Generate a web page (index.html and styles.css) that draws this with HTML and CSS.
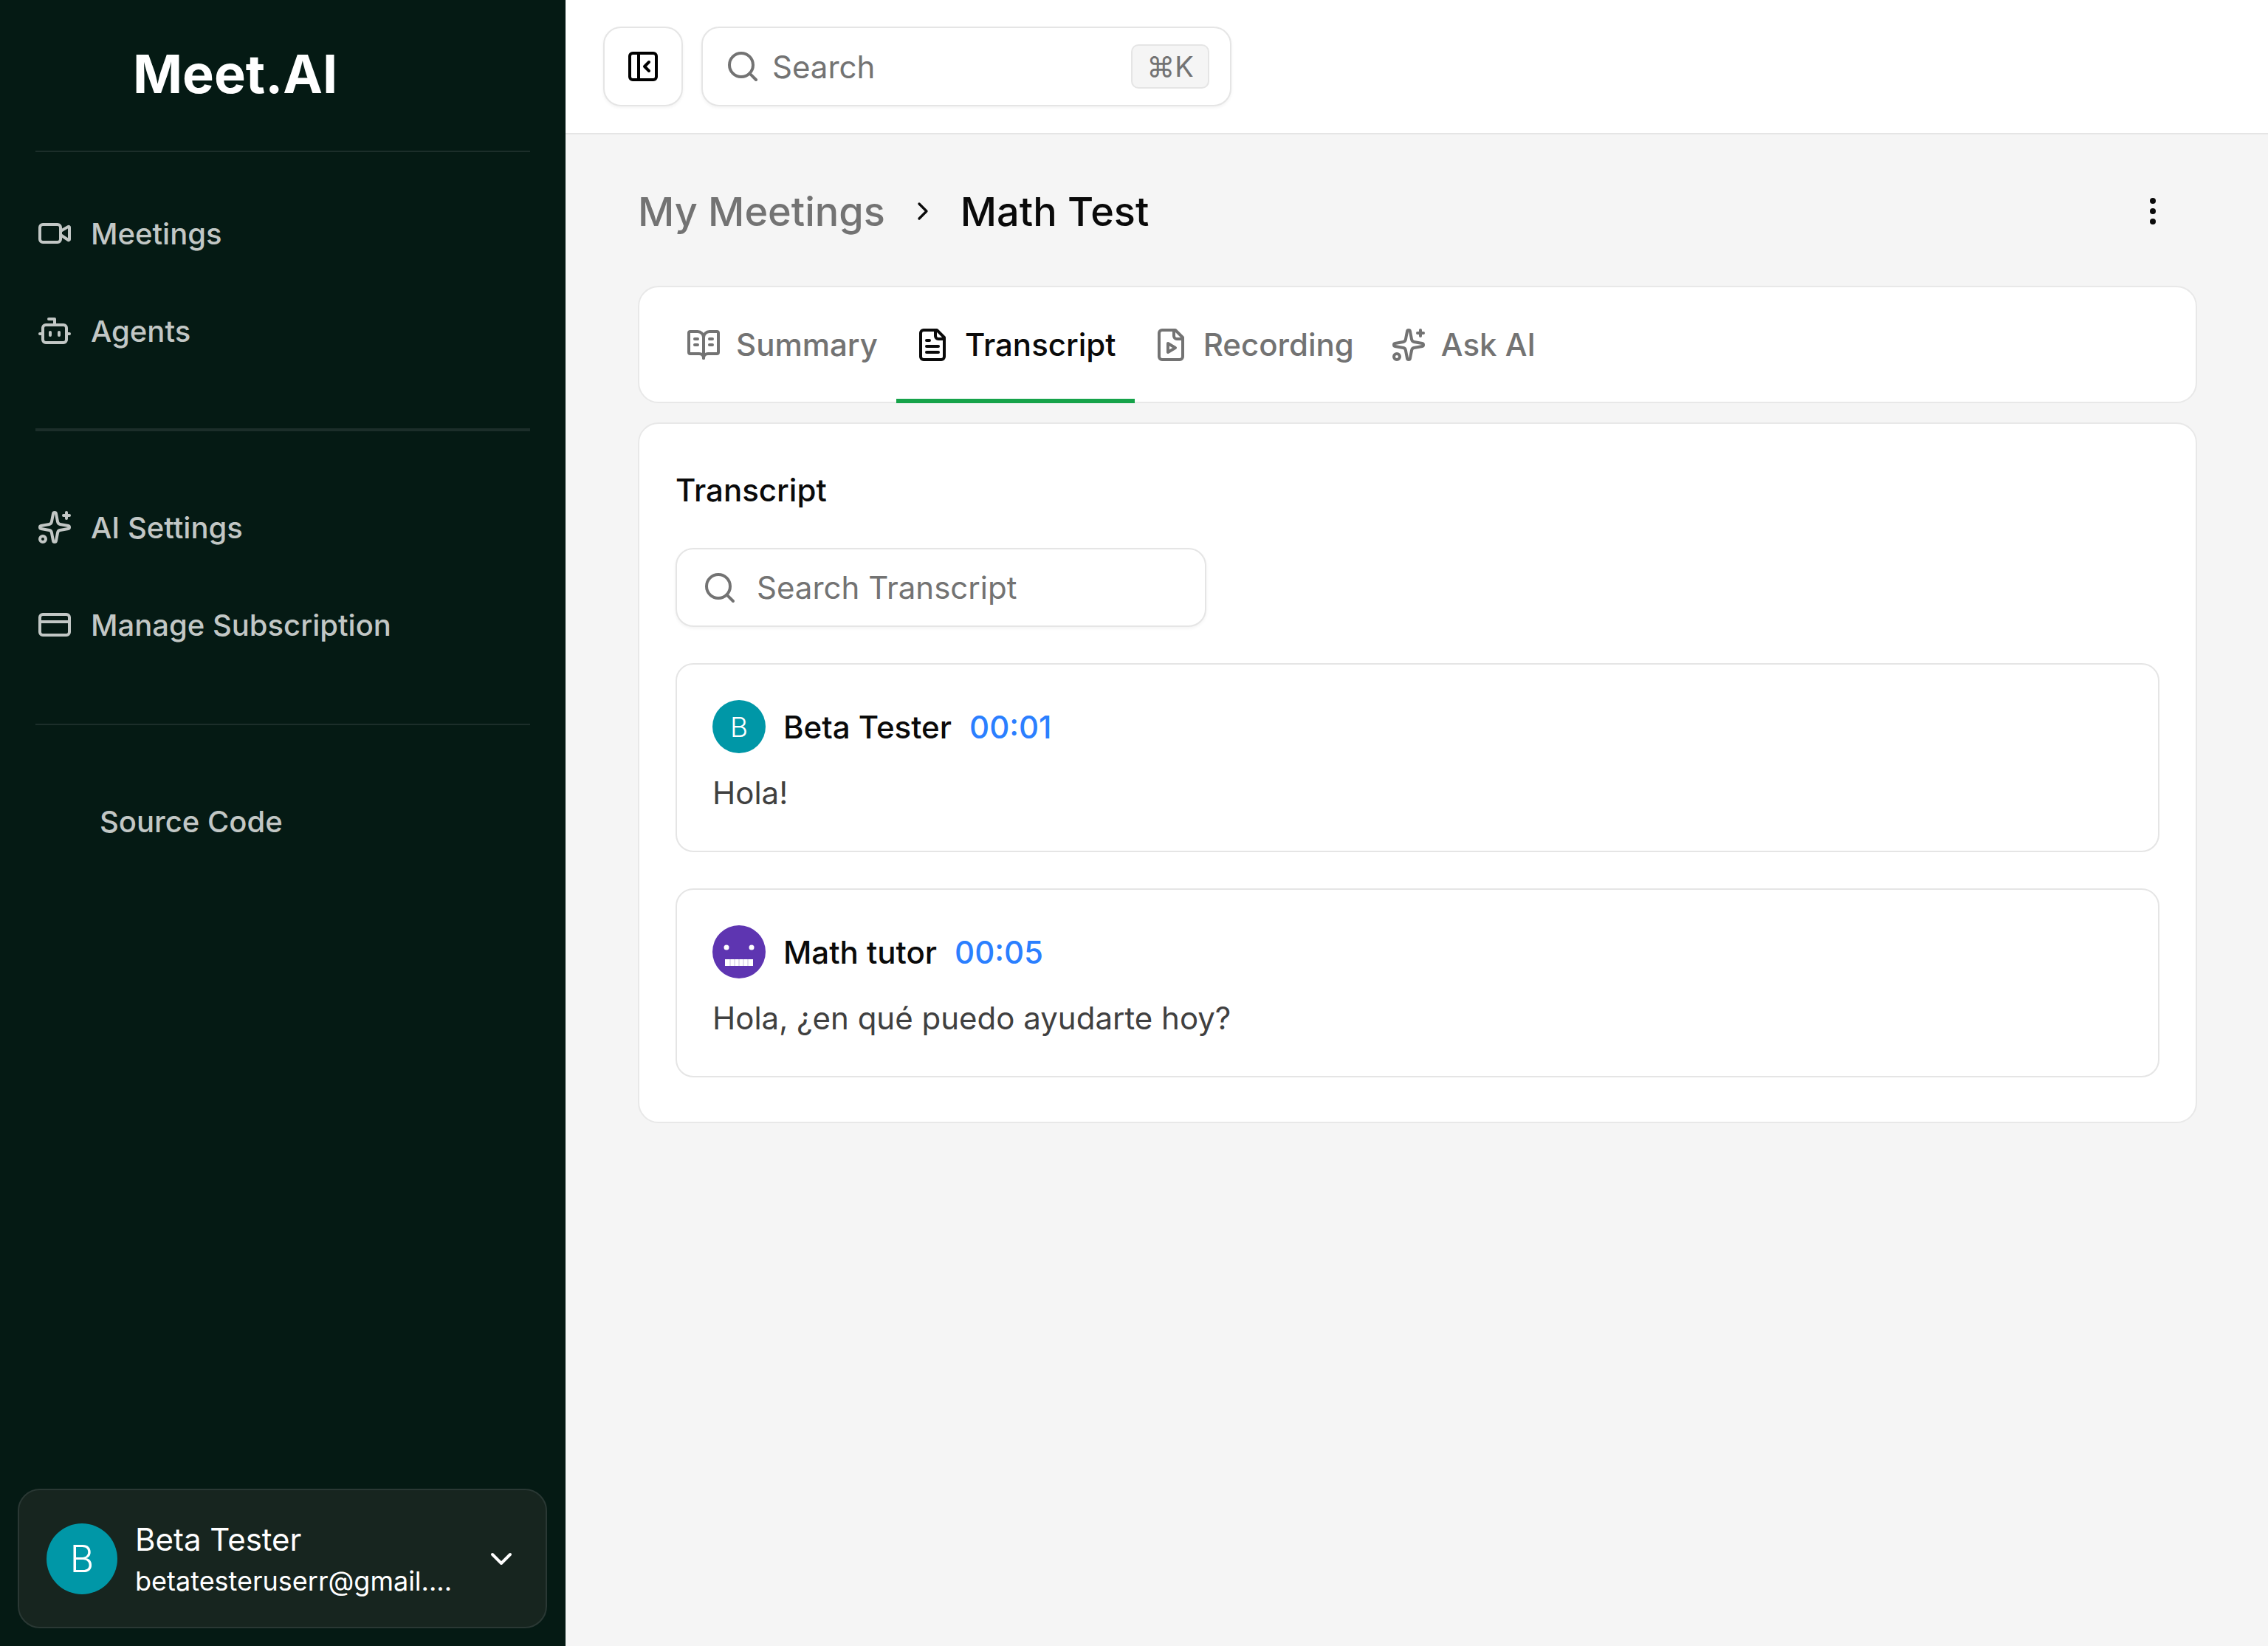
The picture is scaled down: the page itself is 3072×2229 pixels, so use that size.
FILE: index.html

```html
<!DOCTYPE html>
<html>
<head>
    <meta charset="utf-8">
    <title>Meet.AI</title>
    <link rel="stylesheet" href="styles.css">
</head>
<body>
<aside class="sidebar">
    <div class="logo">Meet.AI</div>
    <div class="divider"></div>
    <nav class="nav-section first">
        <a class="nav-item">
            <svg class="icon" viewBox="0 0 24 24"><path d="m16 13 5.223 3.482a.5.5 0 0 0 .777-.416V7.87a.5.5 0 0 0-.752-.432L16 10.5"/><rect x="2" y="6" width="14" height="12" rx="2"/></svg>
            <span>Meetings</span>
        </a>
        <a class="nav-item">
            <svg class="icon" viewBox="0 0 24 24"><path d="M12 8V4H8"/><rect width="16" height="12" x="4" y="8" rx="2"/><path d="M2 14h2"/><path d="M20 14h2"/><path d="M15 13v2"/><path d="M9 13v2"/></svg>
            <span>Agents</span>
        </a>
    </nav>
    <div class="divider thick"></div>
    <nav class="nav-section second">
        <a class="nav-item">
            <svg class="icon" viewBox="0 0 24 24"><path d="M11.017 2.814a1 1 0 0 1 1.966 0l1.051 5.558a2 2 0 0 0 1.594 1.594l5.558 1.051a1 1 0 0 1 0 1.966l-5.558 1.051a2 2 0 0 0-1.594 1.594l-1.051 5.558a1 1 0 0 1-1.966 0l-1.051-5.558a2 2 0 0 0-1.594-1.594l-5.558-1.051a1 1 0 0 1 0-1.966l5.558-1.051a2 2 0 0 0 1.594-1.594z"/><path d="M20 2v4"/><path d="M22 4h-4"/><circle cx="4" cy="20" r="2"/></svg>
            <span>AI Settings</span>
        </a>
        <a class="nav-item">
            <svg class="icon" viewBox="0 0 24 24"><rect width="20" height="14" x="2" y="5" rx="2"/><line x1="2" x2="22" y1="10" y2="10"/></svg>
            <span>Manage Subscription</span>
        </a>
    </nav>
    <div class="divider"></div>
    <nav class="nav-section third">
        <a class="nav-item source">Source Code</a>
    </nav>
    <div class="user-card">
        <div class="avatar large">B</div>
        <div class="user-info">
            <div class="user-name">Beta Tester</div>
            <div class="user-email">betatesteruserr@gmail....</div>
        </div>
        <svg class="icon" viewBox="0 0 24 24"><path d="m6 9 6 6 6-6"/></svg>
    </div>
</aside>

<div class="main">
    <header class="topbar">
        <button class="toggle">
            <svg class="icon" viewBox="0 0 24 24"><rect width="18" height="18" x="3" y="3" rx="2"/><path d="M9 3v18"/><path d="m16 15-3-3 3-3"/></svg>
        </button>
        <div class="search top-search">
            <svg class="icon" viewBox="0 0 24 24"><path d="m21 21-4.34-4.34"/><circle cx="11" cy="11" r="8"/></svg>
            <span>Search</span>
            <kbd class="shortcut">⌘K</kbd>
        </div>
    </header>

    <div class="content">
        <div class="breadcrumb-row">
            <span class="crumb">My Meetings</span>
            <svg class="icon crumb-sep" viewBox="0 0 24 24"><path d="m9 18 6-6-6-6"/></svg>
            <span class="crumb current">Math Test</span>
            <svg class="more" viewBox="0 0 24 24"><circle cx="12" cy="5" r="2"/><circle cx="12" cy="12" r="2"/><circle cx="12" cy="19" r="2"/></svg>
        </div>

        <div class="tabs">
            <div class="tab">
                <svg class="icon" viewBox="0 0 24 24"><path d="M12 7v14"/><path d="M16 12h2"/><path d="M16 8h2"/><path d="M3 18a1 1 0 0 1-1-1V4a1 1 0 0 1 1-1h5a4 4 0 0 1 4 4 4 4 0 0 1 4-4h5a1 1 0 0 1 1 1v13a1 1 0 0 1-1 1h-6a3 3 0 0 0-3 3 3 3 0 0 0-3-3z"/><path d="M6 12h2"/><path d="M6 8h2"/></svg>
                <span>Summary</span>
            </div>
            <div class="tab active">
                <svg class="icon" viewBox="0 0 24 24"><path d="M15 2H6a2 2 0 0 0-2 2v16a2 2 0 0 0 2 2h12a2 2 0 0 0 2-2V7Z"/><path d="M14 2v4a2 2 0 0 0 2 2h4"/><path d="M10 9H8"/><path d="M16 13H8"/><path d="M16 17H8"/></svg>
                <span>Transcript</span>
            </div>
            <div class="tab">
                <svg class="icon" viewBox="0 0 24 24"><path d="M15 2H6a2 2 0 0 0-2 2v16a2 2 0 0 0 2 2h12a2 2 0 0 0 2-2V7Z"/><path d="M14 2v4a2 2 0 0 0 2 2h4"/><path d="m10 11 5 3-5 3v-6Z"/></svg>
                <span>Recording</span>
            </div>
            <div class="tab">
                <svg class="icon" viewBox="0 0 24 24"><path d="M11.017 2.814a1 1 0 0 1 1.966 0l1.051 5.558a2 2 0 0 0 1.594 1.594l5.558 1.051a1 1 0 0 1 0 1.966l-5.558 1.051a2 2 0 0 0-1.594 1.594l-1.051 5.558a1 1 0 0 1-1.966 0l-1.051-5.558a2 2 0 0 0-1.594-1.594l-5.558-1.051a1 1 0 0 1 0-1.966l5.558-1.051a2 2 0 0 0 1.594-1.594z"/><path d="M20 2v4"/><path d="M22 4h-4"/><circle cx="4" cy="20" r="2"/></svg>
                <span>Ask AI</span>
            </div>
        </div>

        <section class="transcript-card">
            <h2 class="card-title">Transcript</h2>
            <div class="search transcript-search">
                <svg class="icon" viewBox="0 0 24 24"><path d="m21 21-4.34-4.34"/><circle cx="11" cy="11" r="8"/></svg>
                <span>Search Transcript</span>
            </div>

            <div class="entry">
                <div class="entry-head">
                    <div class="avatar small">B</div>
                    <span class="speaker">Beta Tester</span>
                    <span class="time">00:01</span>
                </div>
                <p class="entry-text">Hola!</p>
            </div>

            <div class="entry">
                <div class="entry-head">
                    <svg class="bot-face" viewBox="0 0 72 72">
                        <circle cx="36" cy="36" r="36" fill="#5e35b1"/>
                        <circle cx="19" cy="30" r="3.5" fill="#fff"/>
                        <circle cx="53" cy="30" r="3.5" fill="#fff"/>
                        <rect x="17" y="46" width="38" height="9" fill="#fff"/>
                        <path d="M24 46v9M30 46v9M36 46v9M42 46v9M48 46v9" stroke="#c9c0e0" stroke-width="1"/>
                    </svg>
                    <span class="speaker">Math tutor</span>
                    <span class="time">00:05</span>
                </div>
                <p class="entry-text">Hola, ¿en qué puedo ayudarte hoy?</p>
            </div>
        </section>
    </div>
</div>
</body>
</html>
```

FILE: styles.css

```css
* {
    box-sizing: border-box;
}

html, body {
    height: 100%;
}

body {
    margin: 0;
    display: flex;
    overflow: hidden;
    font-family: Inter, "Noto Sans", "DejaVu Sans", sans-serif;
    background-color: #f5f5f5;
    color: #0a0a0a;
}

.icon {
    width: 48px;
    height: 48px;
    flex-shrink: 0;
    fill: none;
    stroke: currentColor;
    stroke-width: 2;
    stroke-linecap: round;
    stroke-linejoin: round;
}

/* sidebar */
.sidebar {
    width: 766px;
    flex-shrink: 0;
    display: flex;
    flex-direction: column;
    background-color: #051a14;
    color: #fff;
}

.logo {
    height: 204px;
    padding: 56px 0 0 180px;
    font-size: 72px;
    line-height: 88px;
    font-weight: 700;
}

.divider {
    height: 2px;
    margin: 0 48px;
    background-color: #1c2e2a;
}

.divider.thick {
    height: 4px;
}

.nav-section.first {
    padding: 44px 0 66px;
}

.nav-section.second {
    padding: 64px 0 68px;
}

.nav-section.third {
    padding: 64px 0 0;
}

.nav-item {
    height: 132px;
    display: flex;
    align-items: center;
    gap: 25px;
    padding-left: 50px;
    font-size: 40px;
    font-weight: 500;
    color: #c2c7c5;
}

.nav-item.source {
    padding-left: 135px;
}

.user-card {
    margin: auto 25px 24px 24px;
    height: 189px;
    display: flex;
    align-items: center;
    padding: 0 36px 0 37px;
    border: 2px solid #2a3834;
    border-radius: 30px;
    background-color: #17251f;
}

.avatar {
    display: flex;
    align-items: center;
    justify-content: center;
    flex-shrink: 0;
    border-radius: 50%;
    background-color: #0097a7;
    color: #fff;
}

.avatar.large {
    width: 96px;
    height: 96px;
    font-size: 50px;
    font-weight: 300;
}

.avatar.small {
    width: 72px;
    height: 72px;
    font-size: 37px;
    font-weight: 300;
}

.user-info {
    flex: 1;
    margin: 5px 0 0 24px;
}

.user-name {
    font-size: 42px;
    line-height: 56px;
}

.user-email {
    font-size: 36px;
    line-height: 56px;
}

/* top bar */
.main {
    flex: 1;
    min-width: 0;
    display: flex;
    flex-direction: column;
}

.topbar {
    height: 182px;
    display: flex;
    align-items: flex-start;
    gap: 25px;
    padding: 36px 0 0 51px;
    background-color: #fff;
    border-bottom: 2px solid #e5e5e5;
}

.toggle, .search {
    height: 108px;
    display: flex;
    align-items: center;
    background-color: #fff;
    border: 2px solid #e5e5e5;
    border-radius: 24px;
    box-shadow: 0 2px 4px rgba(0, 0, 0, 0.05);
}

.toggle {
    width: 108px;
    justify-content: center;
    padding: 0;
    color: #000;
}

.search {
    font-size: 42px;
    color: #737373;
}

.top-search {
    width: 718px;
    gap: 16px;
    padding: 0 28px 0 30px;
}

.shortcut {
    width: 106px;
    height: 60px;
    margin-left: auto;
    display: flex;
    align-items: center;
    justify-content: center;
    background-color: #f5f5f5;
    border: 2px solid #e5e5e5;
    border-radius: 10px;
    font-family: inherit;
    font-size: 38px;
}

/* page content */
.content {
    padding: 64px 96px 0 98px;
}

.breadcrumb-row {
    height: 80px;
    margin-bottom: 61px;
    display: flex;
    align-items: center;
    font-size: 54px;
    font-weight: 500;
}

.crumb {
    color: #737373;
}

.crumb.current {
    color: #0a0a0a;
}

.crumb-sep {
    width: 40px;
    height: 40px;
    margin: 0 31px;
    color: #0a0a0a;
}

.more {
    width: 48px;
    height: 48px;
    margin: 0 36px 0 auto;
    fill: #0a0a0a;
}

.tabs {
    height: 159px;
    display: flex;
    padding-left: 38px;
    background-color: #fff;
    border: 2px solid #e8e8e8;
    border-radius: 28px;
    margin-bottom: 26px;
}

.tab {
    display: flex;
    align-items: center;
    gap: 20px;
    padding: 4px 25px 0;
    margin-bottom: -2px;
    border-bottom: 6px solid transparent;
    font-size: 42px;
    font-weight: 500;
    color: #737373;
}

.tab.active {
    color: #0a0a0a;
    border-bottom-color: #16a34a;
}

.transcript-card {
    height: 949px;
    padding: 0 49px;
    background-color: #fff;
    border: 2px solid #e8e8e8;
    border-radius: 28px;
}

.card-title {
    margin: 60px 0 48px;
    font-size: 42px;
    line-height: 60px;
    font-weight: 500;
}

.transcript-search {
    width: 719px;
    gap: 26px;
    padding-left: 34px;
    height: 107px;
    margin-bottom: 49px;
}

.entry {
    height: 256px;
    margin-bottom: 49px;
    padding: 48px;
    border: 2px solid #e5e5e5;
    border-radius: 24px;
}

.entry-head {
    display: flex;
    align-items: center;
    gap: 24px;
    font-size: 42px;
    font-weight: 500;
}

.bot-face {
    width: 72px;
    height: 72px;
}

.time {
    color: #2b7fff;
}

.entry-text {
    margin: 24px 0 0;
    font-size: 42px;
    line-height: 60px;
    color: #404040;
}
```
